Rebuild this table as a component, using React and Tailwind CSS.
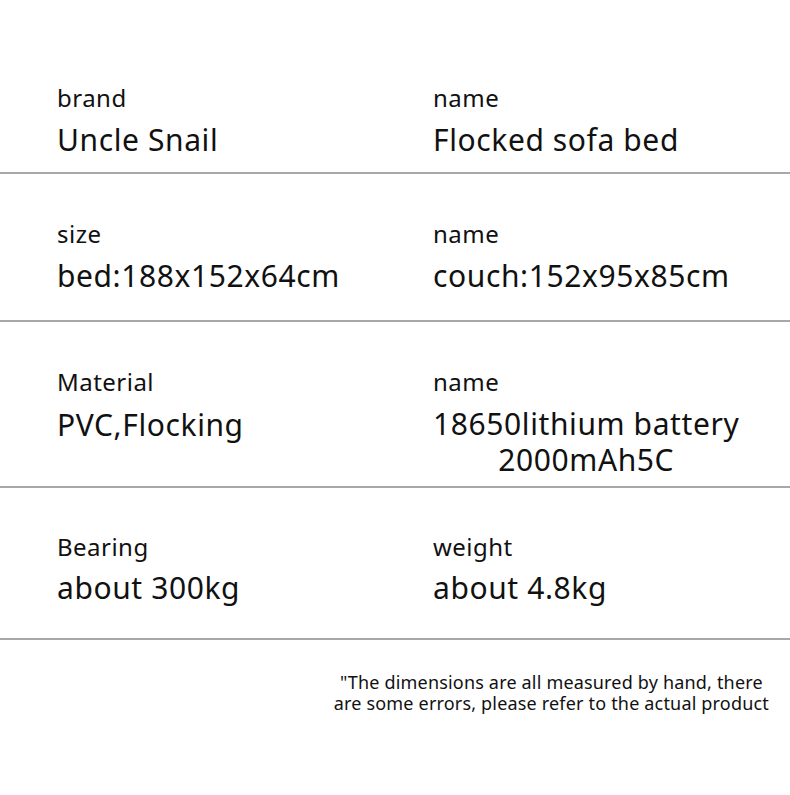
export default function App() {
  const rows = [
    { l1: "brand", v1: "Uncle Snail", l2: "name", v2: "Flocked sofa bed", pt: "pt-[82px]", pb: "pb-[13px]", mt: "mt-[7px]" },
    { l1: "size", v1: "bed:188x152x64cm", l2: "name", v2: "couch:152x95x85cm", pt: "pt-[44px]", pb: "pb-[25px]", mt: "mt-[7px]" },
    { l1: "Material", v1: "PVC,Flocking", l2: "name", v2: ["18650lithium battery", "2000mAh5C"], pt: "pt-[44px]", pb: "pb-[7px]", mt: "mt-[8px]" },
    { l1: "Bearing", v1: "about 300kg", l2: "weight", v2: "about 4.8kg", pt: "pt-[43px]", pb: "pb-[31px]", mt: "mt-[6px]" },
  ];
  return (
    <div className="w-[790px] h-[795px] bg-white text-[#111]" style={{ fontFamily: '"Noto Sans", sans-serif' }}>
      {rows.map((r, i) => (
        <div key={i}>
          <div className={`flex ${r.pt} ${r.pb}`}>
            <div className="w-[433px] pl-[57px]">
              <div className="text-[24px] leading-[32px] tracking-[0.02em]">{r.l1}</div>
              <div className={`text-[30px] leading-[38px] tracking-[0.02em] ${r.mt}`}>{r.v1}</div>
            </div>
            <div className="flex-1">
              <div className="text-[24px] leading-[32px] tracking-[0.02em]">{r.l2}</div>
              <div className={`text-[30px] leading-[38px] tracking-[0.02em] ${r.mt}`}>
                {Array.isArray(r.v2) ? (
                  <div className="inline-block text-center leading-[36px]">
                    {r.v2.map((t, j) => (
                      <div key={j}>{t}</div>
                    ))}
                  </div>
                ) : (
                  r.v2
                )}
              </div>
            </div>
          </div>
          <div className="h-[2px] bg-[#a8a8a8]" />
        </div>
      ))}
      <div className="flex justify-end pr-[21px] pt-[32px]">
        <div className="text-[18px] leading-[21px] tracking-[0.01em] text-center">
          <div>"The dimensions are all measured by hand, there</div>
          <div>are some errors, please refer to the actual product</div>
        </div>
      </div>
    </div>
  );
}
